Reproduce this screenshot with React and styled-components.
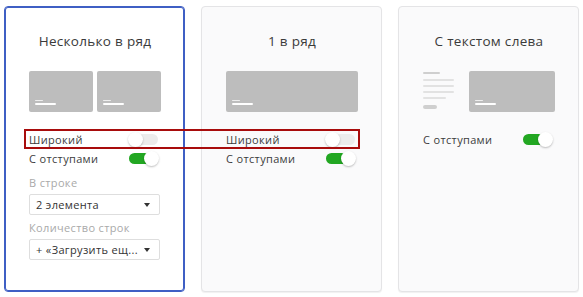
import React from "react";
import styled, { createGlobalStyle, css } from "styled-components";

const Global = createGlobalStyle`
  html, body { margin: 0; padding: 0; background: #ffffff; }
  body { font-family: "Open Sans", "Noto Sans", sans-serif; color: #333; }
`;

const Page = styled.div`
  position: relative;
  display: flex;
  gap: 16px;
  padding: 6px 0 0 4px;
  width: 583px;
  height: 297px;
  box-sizing: border-box;
`;

const Card = styled.div`
  width: 181px;
  height: 286px;
  box-sizing: border-box;
  background: #fafafb;
  border: 1px solid #e4e4e6;
  border-radius: 4px;
  padding: 25px 23px 0 24px;
  display: flex;
  flex-direction: column;
  box-shadow: 0 1px 1px rgba(0, 0, 0, 0.06);
  ${(p) =>
    p.$selected &&
    css`
      border-color: #3f5fc4;
      box-shadow: inset 0 0 0 1px #3f5fc4;
      background: #ffffff;
    `}
`;

const Title = styled.div`
  font-size: 13.5px;
  line-height: 18px;
  letter-spacing: 0.3px;
  text-align: center;
  color: #3a3a3a;
  height: 18px;
`;

const Preview = styled.div`
  margin-top: 21px;
  height: 41px;
  display: flex;
  gap: 4px;
`;

const Img = styled.div`
  flex: ${(p) => p.$flex || 1};
  background: #bdbdbd;
  border-radius: 2px;
  position: relative;
  display: flex;
  flex-direction: column;
  justify-content: flex-end;
  gap: 2px;
  padding: 0 0 7px 6px;
  box-sizing: border-box;
`;

const ImgLine = styled.div`
  width: ${(p) => p.$w}px;
  height: ${(p) => p.$h}px;
  background: ${(p) => p.$c};
  border-radius: 1px;
`;

const TextBlock = styled.div`
  width: 31px;
  margin-right: 11px;
  display: flex;
  flex-direction: column;
  padding-top: 1px;
`;

const TextLine = styled.div`
  width: ${(p) => p.$w}px;
  height: ${(p) => p.$h || 2}px;
  background: ${(p) => p.$c || "#e2e2e2"};
  border-radius: 2px;
  margin-top: ${(p) => p.$mt || 0}px;
`;

const Rows = styled.div`
  margin-top: 18px;
  display: flex;
  flex-direction: column;
`;

const Row = styled.div`
  height: 19px;
  display: flex;
  align-items: center;
  justify-content: space-between;
  font-size: 11px;
  letter-spacing: 0.35px;
  color: #3c3c3c;
  padding-right: 2px;
`;

const Toggle = styled.div`
  position: relative;
  width: 31px;
  height: 15px;
  display: flex;
  align-items: center;
`;

const Track = styled.div`
  width: 29px;
  height: 11px;
  margin-left: 1px;
  border-radius: 6px;
  background: ${(p) => (p.$on ? "#22a722" : "#ececec")};
`;

const Knob = styled.div`
  position: absolute;
  top: 0;
  ${(p) => (p.$on ? "right: 0;" : "left: 0;")}
  width: 15px;
  height: 15px;
  border-radius: 50%;
  background: #ffffff;
  box-shadow: 0 1px 2px rgba(0, 0, 0, 0.25);
`;

const FieldLabel = styled.div`
  font-size: 11px;
  line-height: 16px;
  letter-spacing: 0.35px;
  color: #a9a9a9;
  margin-top: ${(p) => p.$mt}px;
`;

const Select = styled.div`
  margin-top: 3px;
  height: 21px;
  box-sizing: border-box;
  background: #ffffff;
  border: 1px solid #dedede;
  border-radius: 2px;
  display: flex;
  align-items: center;
  justify-content: space-between;
  padding: 0 9px 0 6px;
  font-size: 11px;
  letter-spacing: 0.35px;
  color: #333;
  width: 131px;
`;

const Caret = styled.span`
  width: 0;
  height: 0;
  border-left: 3px solid transparent;
  border-right: 3px solid transparent;
  border-top: 4px solid #333;
`;

const Highlight = styled.div`
  position: absolute;
  left: 24px;
  top: 129px;
  width: 336px;
  height: 20px;
  box-sizing: border-box;
  border: 2px solid #a80c0c;
  pointer-events: none;
`;

const Switch = ({ on }) => (
  <Toggle>
    <Track $on={on} />
    <Knob $on={on} />
  </Toggle>
);

const Picture = ({ flex }) => (
  <Img $flex={flex}>
    <ImgLine $w={8} $h={1} $c="rgba(255,255,255,0.75)" />
    <ImgLine $w={21} $h={2} $c="#ffffff" />
  </Img>
);

export default function App() {
  return (
    <>
      <Global />
      <Page>
        <Card $selected>
          <Title>Несколько в ряд</Title>
          <Preview>
            <Picture />
            <Picture />
          </Preview>
          <Rows>
            <Row>
              Широкий <Switch on={false} />
            </Row>
            <Row>
              С отступами <Switch on />
            </Row>
          </Rows>
          <FieldLabel $mt={7}>В строке</FieldLabel>
          <Select>
            2 элемента <Caret />
          </Select>
          <FieldLabel $mt={5}>Количество строк</FieldLabel>
          <Select>
            + «Загрузить ещ... <Caret />
          </Select>
        </Card>
        <Card>
          <Title>1 в ряд</Title>
          <Preview>
            <Picture />
          </Preview>
          <Rows>
            <Row>
              Широкий <Switch on={false} />
            </Row>
            <Row>
              С отступами <Switch on />
            </Row>
          </Rows>
        </Card>
        <Card>
          <Title>С текстом слева</Title>
          <Preview>
            <TextBlock>
              <TextLine $w={17} $c="#cfcfcf" />
              <TextLine $w={31} $mt={5} />
              <TextLine $w={31} $mt={4} />
              <TextLine $w={31} $mt={4} />
              <TextLine $w={23} $mt={4} />
              <TextLine $w={14} $h={4} $mt={6} $c="#cfcfcf" />
            </TextBlock>
            <Picture />
          </Preview>
          <Rows>
            <Row>
              С отступами <Switch on />
            </Row>
          </Rows>
        </Card>
        <Highlight />
      </Page>
    </>
  );
}
